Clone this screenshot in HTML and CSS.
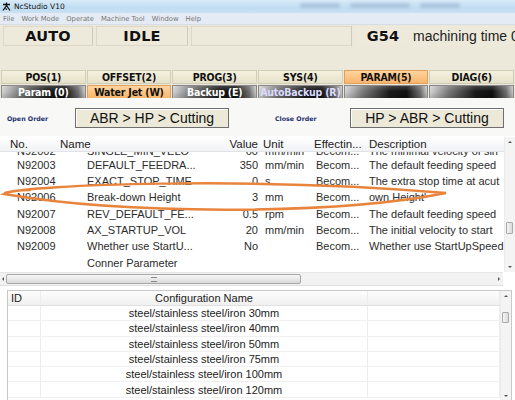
FILE: index.html
```html
<!DOCTYPE html>
<html>
<head>
<meta charset="utf-8">
<link rel="stylesheet" href="styles.css">
</head>
<body>
<div class="app">
  <div class="titlebar">
    <svg class="appicon" width="9" height="9" viewBox="0 0 9 9"><path d="M1 2.5H8M4.5 0.5V3.5M4.5 3.5L1 8.5M4.5 3.5L8 8.5M3.5 6.5L5 7.5" stroke="#111" stroke-width="1.3" fill="none"/></svg>
    <span class="title">NcStudio V10</span>
    <span class="blur b1"></span><span class="blur b2"></span><span class="blur b3"></span>
  </div>
  <div class="menubar">
    <span>File</span><span>Work Mode</span><span>Operate</span><span>Machine Tool</span><span>Window</span><span>Help</span>
  </div>
  <div class="status">
    <div class="cell c1 big">AUTO</div>
    <div class="cell c2 big">IDLE</div>
    <div class="cell c3"></div>
    <div class="cell c4 big">G54</div>
    <div class="cell c5">machining time 00:00:00</div>
  </div>
  <div class="spacer"></div>
  <div class="tabs row1">
    <div class="tab">POS(1)</div>
    <div class="tab">OFFSET(2)</div>
    <div class="tab">PROG(3)</div>
    <div class="tab">SYS(4)</div>
    <div class="tab on">PARAM(5)</div>
    <div class="tab">DIAG(6)</div>
  </div>
  <div class="tabs row2">
    <div class="tab dark">Param (0)</div>
    <div class="tab on">Water Jet (W)</div>
    <div class="tab dark">Backup (E)</div>
    <div class="tab dark lav">AutoBackup (R)</div>
    <div class="tab dark"></div>
    <div class="tab dark"></div>
  </div>
  <div class="orders">
    <span class="olabel">Open Order</span>
    <div class="obtn">ABR &gt; HP &gt; Cutting</div>
    <span class="olabel close">Close Order</span>
    <div class="obtn">HP &gt; ABR &gt; Cutting</div>
  </div>
  <div class="grid1">
    <div class="g1main">
      <div class="g1cols">
        <div class="g1head">
          <span class="h-no">No.</span><span class="h-name">Name</span><span class="h-val">Value</span><span class="h-unit">Unit</span><span class="h-eff">Effectin...</span><span class="h-desc">Description</span>
        </div>
        <div class="g1body">
          <div class="rows">
            <div class="row first"><span>N92002</span><span>SINGLE_MIN_VELO</span><span class="v">60</span><span>mm/min</span><span>Becom...</span><span>The minimal velocity of sin</span></div>
            <div class="row"><span>N92003</span><span>DEFAULT_FEEDRA...</span><span class="v">350</span><span>mm/min</span><span>Becom...</span><span>The default feeding speed</span></div>
            <div class="row"><span>N92004</span><span>EXACT_STOP_TIME</span><span class="v">0</span><span>s</span><span>Becom...</span><span>The extra stop time at acut</span></div>
            <div class="row"><span>N92006</span><span>Break-down Height</span><span class="v">3</span><span>mm</span><span>Becom...</span><span>own Height'</span></div>
            <div class="row"><span>N92007</span><span>REV_DEFAULT_FE...</span><span class="v">0.5</span><span>rpm</span><span>Becom...</span><span>The default feeding speed</span></div>
            <div class="row"><span>N92008</span><span>AX_STARTUP_VOL</span><span class="v">20</span><span>mm/min</span><span>Becom...</span><span>The initial velocity to start</span></div>
            <div class="row"><span>N92009</span><span>Whether use StartU...</span><span class="v">No</span><span></span><span>Becom...</span><span>Whether use StartUpSpeed</span></div>
            <div class="row"><span></span><span>Conner Parameter</span><span class="v"></span><span></span><span></span><span></span></div>
            <div class="row"><span>N92011</span><span class="ind">WHETHER_U...</span><span class="v">Yes</span><span></span><span>Becom...</span><span>Whether use acceleration</span></div>
          </div>
        </div>
      </div>
      <div class="vscroll">
        <span class="arr up"></span>
        <span class="thumb t1"></span>
        <span class="arr dn"></span>
      </div>
    </div>
    <div class="hscroll">
      <span class="harr lt"></span>
      <span class="hthumb"><span class="grip"></span></span>
      <span class="harr rt"></span>
    </div>
    <svg class="mark" width="515" height="40" viewBox="0 180 515 40"><path d="M5 193 C 30 185, 250 176, 446 193 C 330 216, 120 214, 4 194 C 10 191, 20 190, 30 190" fill="none" stroke="#e8843c" stroke-width="2.5" stroke-linecap="round"/></svg>
  </div>
  <div class="grid2">
    <div class="g2main">
      <div class="g2cols">
        <div class="g2row g2head"><span>ID</span><span class="ctr">Configuration Name</span><span></span></div>
        <div class="g2row"><span></span><span class="ctr">steel/stainless steel/iron 30mm</span><span></span></div>
        <div class="g2row"><span></span><span class="ctr">steel/stainless steel/iron 40mm</span><span></span></div>
        <div class="g2row"><span></span><span class="ctr">steel/stainless steel/iron 50mm</span><span></span></div>
        <div class="g2row"><span></span><span class="ctr">steel/stainless steel/iron 75mm</span><span></span></div>
        <div class="g2row"><span></span><span class="ctr">steel/stainless steel/iron 100mm</span><span></span></div>
        <div class="g2row"><span></span><span class="ctr">steel/stainless steel/iron 120mm</span><span></span></div>
      </div>
      <div class="vscroll v2">
        <span class="arr up"></span>
        <span class="thumb t2"></span>
        <span class="arr dn"></span>
      </div>
    </div>
  </div>
</div>
</body>
</html>
```
FILE: styles.css
```css
html, body { margin: 0; padding: 0; }
body { width: 515px; height: 400px; overflow: hidden; background: #f6f6f4; font-family: "Liberation Sans", Arial, sans-serif; }
.app { width: 515px; height: 400px; display: flex; flex-direction: column; overflow: hidden; position: relative; }

.titlebar { height: 13px; flex: none; display: flex; align-items: center; gap: 3px; padding-left: 2px; position: relative; overflow: hidden;
  background: linear-gradient(180deg, #d9ebf8 0%, #bfdcf1 60%, #c9e1f2 100%); }
.title { font-family: "DejaVu Sans", sans-serif; font-size: 7.5px; color: #111; }
.blur { position: absolute; top: 3px; height: 5px; border-radius: 3px; background: rgba(120,150,185,0.35); filter: blur(1.5px); }
.b1 { left: 300px; width: 40px; }
.b2 { left: 350px; width: 60px; }
.b3 { left: 420px; width: 40px; }

.menubar { height: 11px; flex: none; display: flex; align-items: center; gap: 7px; padding-left: 3px; background: #e4ebf4; border-bottom: 1px solid #d5dde8;
  font-family: "DejaVu Sans", sans-serif; font-size: 6.8px; color: #777; }

.status { height: 21px; flex: none; display: flex; gap: 3px; padding: 1px 0 0 3px; background: #ede9da; }
.cell { flex: none; height: 20px; border: 1px solid #dcd8c8; border-right-color: #cfcbb8; background: #eeeadb; display: flex; align-items: center; justify-content: center; box-sizing: border-box; }
.big { font-family: "DejaVu Sans", sans-serif; font-weight: bold; font-size: 14.5px; color: #111; letter-spacing: 0.2px; }
.c1 { width: 90px; }
.c2 { width: 92px; }
.c3 { width: 161px; }
.c4 { width: 52px; padding-left: 4px; border: none; }
.c5 { flex: 1 1 auto; min-width: 0; justify-content: flex-start; padding-left: 3px; font-size: 14px; color: #222; white-space: nowrap; overflow: hidden; border: none; }

.spacer { height: 23px; flex: none; background: #ede9da; }

.tabs { display: grid; grid-template-columns: repeat(6, 1fr); gap: 1px; flex: none; background: #ede9da; padding: 0 1px; }
.row1 { height: 14px; padding-bottom: 1px; }
.row2 { height: 13px; }
.tab { font-family: "DejaVu Sans Condensed", "DejaVu Sans", sans-serif; font-weight: bold; font-size: 10.5px; color: #111; letter-spacing: -0.2px;
  display: flex; align-items: center; justify-content: center; background: linear-gradient(180deg, #f5f1df, #e6e1c9); border: 1px solid #d2cdb6; box-sizing: border-box; white-space: nowrap; }
.tab.on { background: linear-gradient(180deg, #ffd49e, #f8b56c); border-color: #e0a060; }
.tab.dark { color: #fff; border-color: #888;
  background: linear-gradient(180deg, rgba(255,255,255,0.18), rgba(0,0,0,0) 45%, rgba(0,0,0,0.15)),
              linear-gradient(90deg, #d4d4d4 0%, #7a7a7a 22%, #1a1a1a 55%, #101010 75%, #707070 92%, #c8c8c8 100%); }
.tab.lav { color: #dcdcff; }

.orders { height: 38px; flex: none; display: flex; align-items: center; background: #f8f8f6; }
.olabel { font-family: "DejaVu Sans", sans-serif; font-weight: bold; font-size: 6.3px; color: #1f2f6f; width: 75px; padding-left: 7px; box-sizing: border-box; margin-top: 2px; }
.olabel.close { width: 121px; padding-left: 46px; }
.obtn { width: 154px; height: 20px; box-sizing: border-box; border: 1px solid #6f6f6f; box-shadow: inset 1px 1px 0 #fff; background: #ece9d9;
  display: flex; align-items: center; justify-content: center; font-size: 14px; color: #111; margin-top: 2px; }

.grid1 { height: 152px; flex: none; background: #fff; display: flex; flex-direction: column; padding-top: 1px; box-sizing: border-box; position: relative; }
.g1main { flex: 1; display: flex; min-height: 0; }
.g1cols { flex: 1; display: flex; flex-direction: column; min-width: 0; }
.g1head { height: 15px; flex: none; display: grid; grid-template-columns: 57px 168px 35px 53px 54px 1fr; align-items: center; font-size: 11.5px; color: #222;
  background: linear-gradient(180deg, #ffffff, #f1f2f4); border-bottom: 1px solid #e2e3e6; box-sizing: border-box; white-space: nowrap; }
.h-no { padding-left: 10px; }
.h-name { padding-left: 3px; }
.h-val { text-align: right; padding-right: 2px; }
.h-unit { padding-left: 3px; }
.h-eff { padding-left: 1px; }
.h-desc { padding-left: 2px; }
.g1body { flex: 1; overflow: hidden; min-height: 0; }
.rows { margin-top: -9px; }
.row { height: 16.3px; display: grid; grid-template-columns: 87px 138px 35px 53px 54px 1fr; align-items: center; font-size: 11px; color: #2c2c2c; white-space: nowrap; }
.row.first { height: 13.6px; align-items: end; line-height: 12px; }
.row span { overflow: hidden; }
.row span:first-child { padding-left: 17px; }
.row .v { text-align: right; padding-right: 2px; }
.row span:nth-child(4) { padding-left: 5px; }
.row span:nth-child(5) { padding-left: 3px; }
.row span:nth-child(6) { padding-left: 2px; }
.row .ind { padding-left: 26px; }

.vscroll { width: 10px; flex: none; display: flex; flex-direction: column; align-items: center; background: #f4f4f4; border-left: 1px solid #ececec; position: relative; }
.arr { width: 0; height: 0; border-left: 2px solid transparent; border-right: 2px solid transparent; margin: 4px 0; }
.arr.up { border-bottom: 2px solid #555; }
.arr.dn { border-top: 2px solid #555; margin-top: auto; }
.thumb { position: absolute; left: 1px; width: 7px; border: 1px solid #aaa; border-radius: 1px; background: linear-gradient(90deg, #f4f4f4, #dcdcdc); box-sizing: border-box; }
.t1 { top: 85px; height: 12px; }
.t2 { top: 21px; height: 11px; }

.hscroll { height: 12px; flex: none; display: flex; align-items: center; background: #f2f2f2; border-top: 1px solid #e6e6e6; border-bottom: 1px solid #e0e0e0; margin-bottom: 2px; margin-right: 12px; position: relative; }
.harr { width: 0; height: 0; border-top: 2px solid transparent; border-bottom: 2px solid transparent; }
.harr.lt { border-right: 2px solid #555; margin: 0 2px 0 2px; }
.harr.rt { border-left: 2px solid #555; margin-left: auto; margin-right: 3px; }
.hthumb { width: 295px; height: 10px; border: 1px solid #a8a8a8; border-radius: 2px; background: linear-gradient(180deg, #f7f7f7, #dadada); box-sizing: border-box; display: flex; align-items: center; justify-content: center; }
.grip { width: 6px; height: 3px; border-top: 1px solid #888; border-bottom: 1px solid #888; }

.mark { position: absolute; left: 0; top: 44px; pointer-events: none; }

.grid2 { flex: 1; padding: 2px 3px 0 7px; background: #fff; }
.g2main { height: 111px; display: flex; border: 1px solid #c8c8c8; border-bottom: none; box-sizing: border-box; }
.g2cols { flex: 1; display: flex; flex-direction: column; }
.g2row { height: 15.3px; flex: none; display: grid; grid-template-columns: 33px 327px 1fr; font-size: 11px; color: #222; align-items: center; box-sizing: border-box; border-bottom: 1px solid #f0f0f0; }
.g2row span { height: 100%; display: flex; align-items: center; border-right: 1px solid #ececec; box-sizing: border-box; }
.g2row span:first-child { padding-left: 3px; }
.g2row .ctr { justify-content: center; }
.g2head { background: linear-gradient(180deg, #fdfdfd, #f0f0f0); border-bottom: 1px solid #e0e0e0; height: 15px; }
.v2 { border-left: 1px solid #ececec; }
```
